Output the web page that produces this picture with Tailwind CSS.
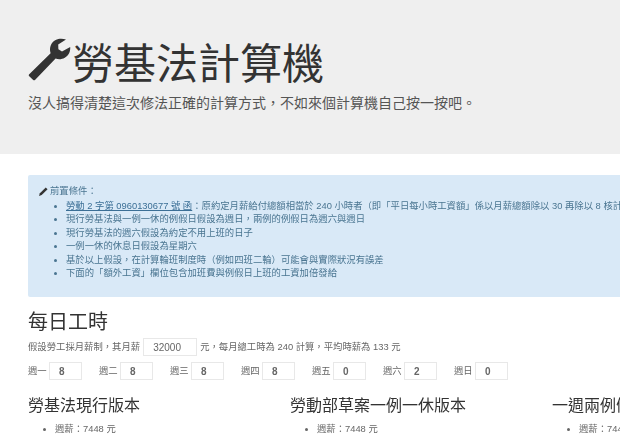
<!DOCTYPE html>
<html lang="zh-Hant">
<head>
<meta charset="utf-8">
<script src="https://cdn.jsdelivr.net/npm/@tailwindcss/browser@4"></script>
</head>
<body class="w-[620px] h-[434px] overflow-hidden bg-white font-['Liberation_Sans','Noto_Sans_CJK_SC',sans-serif] text-[#333]">
<div class="w-[900px] blur-[0.5px]">
  <header class="h-[154px] bg-[#efefef] px-[28px] pt-[35px]">
    <div class="flex items-center h-[60px]">
      <svg class="w-[44px] h-[44px] -mt-[12px]" viewBox="0 0 44 44"><path fill="#333" d="M1 37.5 L22.6 16.2 C21 10.5 23 5.5 27.6 3 C31 1.2 35 1.4 38 2.6 L30.2 7.6 L30.4 12.2 L34 14.6 L42.2 10 C42.6 14.5 40.8 18.5 36.8 20.8 C33.6 22.6 30.4 22.6 27.6 21.6 L7 43 C6.4 43.4 5.8 43.4 5.2 43 L1 39 C0.6 38.5 0.6 38 1 37.5 Z"/></svg>
      <h1 class="text-[42px] leading-[60px] font-normal text-[#333]">勞基法計算機</h1>
    </div>
    <p class="text-[14px] leading-[20px] -mt-[2px] text-[#555]">沒人搞得清楚這次修法正確的計算方式&#xFF0C;不如來個計算機自己按一按吧&#x3002;</p>
  </header>

  <section class="ml-[28px] mt-[21px] w-[860px] h-[122px] rounded-[2px] bg-[#d9e9f7] pt-[10px] pl-[11px] text-[9.35px] leading-[13.4px] text-[#4a7591]">
    <div class="flex items-center gap-[2px] h-[13px]">
      <svg class="w-[9px] h-[9px]" viewBox="0 0 10 10"><path fill="#333" d="M0 10 L1 7 L7.5 .5 L9.5 2.5 L3 9 Z"/></svg>
      <span>前置條件&#xFF1A;</span>
    </div>
    <ul class="list-disc pl-[27px] mt-[2px]">
      <li><a class="underline text-[#3b6f96]">勞動 2 字第 0960130677 號 函</a>&#xFF1A;原約定月薪給付總額相當於 240 小時者&#xFF08;即「平日每小時工資額」係以月薪總額除以 30 再除以 8 核計&#xFF09;</li>
      <li>現行勞基法與一例一休的例假日假設為週日&#xFF0C;兩例的例假日為週六與週日</li>
      <li>現行勞基法的週六假設為約定不用上班的日子</li>
      <li>一例一休的休息日假設為星期六</li>
      <li>基於以上假設&#xFF0C;在計算輪班制度時&#xFF08;例如四班二輪&#xFF09;可能會與實際狀況有誤差</li>
      <li>下面的「額外工資」欄位包含加班費與例假日上班的工資加倍發給</li>
    </ul>
  </section>

  <section class="px-[28px] mt-[12px]">
    <h2 class="text-[20px] leading-[26px] font-normal">每日工時</h2>
    <div class="flex items-center mt-[3px] h-[18px] text-[9.35px] text-[#666]">
      <span>假設勞工採月薪制&#xFF0C;其月薪</span>
      <span class="flex items-center w-[54px] h-[18px] ml-[3px] mr-[3px] pl-[9px] border border-[#e8e8e8] text-[10px]">32000</span>
      <span>元&#xFF0C;每月總工時為 240 計算&#xFF0C;平均時薪為 133 元</span>
    </div>
    <div class="flex mt-[6px] gap-[17px] text-[9.35px] text-[#666]">
      <div class="flex items-center gap-[2px]"><span class="w-[19px]">週一</span><span class="flex items-center w-[33px] h-[18px] pl-[9px] border border-[#e8e8e8] font-bold text-[10px]">8</span></div>
      <div class="flex items-center gap-[2px]"><span class="w-[19px]">週二</span><span class="flex items-center w-[33px] h-[18px] pl-[9px] border border-[#e8e8e8] font-bold text-[10px]">8</span></div>
      <div class="flex items-center gap-[2px]"><span class="w-[19px]">週三</span><span class="flex items-center w-[33px] h-[18px] pl-[9px] border border-[#e8e8e8] font-bold text-[10px]">8</span></div>
      <div class="flex items-center gap-[2px]"><span class="w-[19px]">週四</span><span class="flex items-center w-[33px] h-[18px] pl-[9px] border border-[#e8e8e8] font-bold text-[10px]">8</span></div>
      <div class="flex items-center gap-[2px]"><span class="w-[19px]">週五</span><span class="flex items-center w-[33px] h-[18px] pl-[9px] border border-[#e8e8e8] font-bold text-[10px]">0</span></div>
      <div class="flex items-center gap-[2px]"><span class="w-[19px]">週六</span><span class="flex items-center w-[33px] h-[18px] pl-[9px] border border-[#e8e8e8] font-bold text-[10px]">2</span></div>
      <div class="flex items-center gap-[2px]"><span class="w-[19px]">週日</span><span class="flex items-center w-[33px] h-[18px] pl-[9px] border border-[#e8e8e8] font-bold text-[10px]">0</span></div>
    </div>
    <div class="grid grid-cols-[262px_262px_262px] mt-[15px]">
      <div>
        <h3 class="text-[16px] leading-[22px] font-normal">勞基法現行版本</h3>
        <ul class="list-disc pl-[27px] mt-[6px] text-[9.35px] leading-[13px] text-[#666]"><li>週薪&#xFF1A;7448 元</li></ul>
      </div>
      <div>
        <h3 class="text-[16px] leading-[22px] font-normal">勞動部草案一例一休版本</h3>
        <ul class="list-disc pl-[27px] mt-[6px] text-[9.35px] leading-[13px] text-[#666]"><li>週薪&#xFF1A;7448 元</li></ul>
      </div>
      <div>
        <h3 class="text-[16px] leading-[22px] font-normal">一週兩例假版本</h3>
        <ul class="list-disc pl-[27px] mt-[6px] text-[9.35px] leading-[13px] text-[#666]"><li>週薪&#xFF1A;7448 元</li></ul>
      </div>
    </div>
  </section>
</div>
</body>
</html>
